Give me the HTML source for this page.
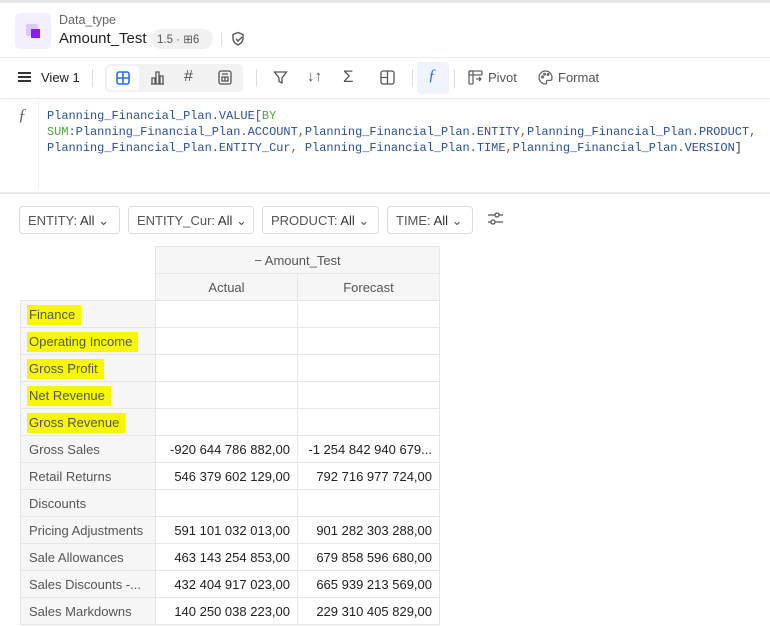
<!DOCTYPE html>
<html><head><meta charset="utf-8"><style>
*{box-sizing:border-box;margin:0;padding:0}
body{width:770px;height:626px;overflow:hidden;background:#fff;font-family:"Liberation Sans",sans-serif;color:#222;position:relative}
.a{position:absolute}
.mono{font-family:"Liberation Mono",monospace;font-size:11.95px;color:#2d4f9e;line-height:16px}
.flt{position:absolute;top:206px;height:28px;border:1px solid #dcdcdc;border-radius:4px;font-size:13px;color:#555;padding:6px 8px;white-space:nowrap}
.flt b{font-weight:normal;color:#333}
table{position:absolute;left:20px;top:246px;border-collapse:collapse;font-size:13px}
td{border:1px solid #e6e6e6;height:27px;padding:0 8px;color:#555;white-space:nowrap}
td.h{background:#f6f6f7;width:135px}
td.n{width:142px;text-align:right;color:#222;padding-right:7px}
.hl{background:#f7f700;padding:2px 6px 3px 2px;margin-left:-2px;color:#555}
</style></head><body>
<div class="a" style="left:0;top:0;width:770px;height:3px;background:#e6e6e6"></div>
<div class="a" style="left:15px;top:13px;width:36px;height:36px;background:#f4eefe;border-radius:5px"></div>
<div class="a" style="left:26px;top:24px;width:12px;height:12px;background:#ddc8fb;border-radius:2px"></div>
<div class="a" style="left:31px;top:29px;width:9px;height:9px;background:#8a1cf0"></div>
<div class="a" style="left:59px;top:13px;font-size:12.5px;color:#666">Data_type</div>
<div class="a" style="left:59px;top:30px;font-size:15px;color:#222">Amount_Test</div>
<div class="a" style="left:151px;top:29px;width:62px;height:20px;background:#f1f1f2;border-radius:10px;font-size:11.5px;color:#555;padding:3px 6px">1.5 · ⊞6</div>
<div class="a" style="left:221px;top:32px;width:1px;height:14px;background:#ddd"></div>
<svg class="a" style="left:230px;top:31px" width="16" height="16" viewBox="0 0 16 16" fill="none" stroke="#555" stroke-width="1.4"><path d="M8 1.5l5 2v4c0 3-2 5-5 6.5C5 12.5 3 10.5 3 7.5v-4z"/><path d="M6 8l2 2 4-4"/></svg>
<div class="a" style="left:0;top:57px;width:770px;height:1px;background:#ececec"></div>
<div class="a" style="left:18px;top:72px;width:13px;height:2px;background:#333;box-shadow:0 4px #333,0 8px #333"></div>
<div class="a" style="left:41px;top:70px;font-size:13px;color:#222">View 1</div>
<div class="a" style="left:92px;top:69px;width:1px;height:18px;background:#ddd"></div>
<div class="a" style="left:105px;top:64px;width:138px;height:28px;background:#f2f2f3;border-radius:5px"></div>
<div class="a" style="left:107px;top:66px;width:32px;height:24px;background:#fff;border-radius:4px"></div>
<svg class="a" style="left:116px;top:71px" width="14" height="14" fill="none" stroke="#2a6ee8" stroke-width="1.6"><rect x="1" y="1" width="12" height="12" rx="2"/><path d="M7 1v12M1 7h12"/></svg>
<svg class="a" style="left:150px;top:70px" width="15" height="15" fill="none" stroke="#555" stroke-width="1.3"><path d="M1 14h13M2 14V8h3v6M6 14V2h3v12M10 14V6h3v8"/></svg>
<div class="a" style="left:184px;top:68px;font-size:16px;color:#555">#</div>
<svg class="a" style="left:218px;top:70px" width="14" height="15" fill="none" stroke="#555" stroke-width="1.3"><rect x="1" y="1" width="12" height="13" rx="2"/><path d="M4 4h6M4 7h6v4H4z M7 7v4"/></svg>
<div class="a" style="left:256px;top:69px;width:1px;height:18px;background:#ddd"></div>
<svg class="a" style="left:273px;top:70px" width="15" height="15" fill="none" stroke="#555" stroke-width="1.3"><path d="M1.5 2h12l-4.5 6v5l-3-1.5V8z"/></svg>
<div class="a" style="left:307px;top:68px;font-size:15px;color:#555">↓↑</div>
<div class="a" style="left:343px;top:67px;font-size:17px;color:#555">Σ</div>
<svg class="a" style="left:380px;top:70px" width="15" height="15" fill="none" stroke="#555" stroke-width="1.3"><rect x="1" y="1" width="13" height="13" rx="2"/><path d="M7.5 1v13M1 7.5h6.5"/></svg>
<div class="a" style="left:412px;top:69px;width:1px;height:18px;background:#ddd"></div>
<div class="a" style="left:417px;top:62px;width:32px;height:32px;background:#eef3fd;border-radius:4px"></div>
<div class="a" style="left:428px;top:67px;font-size:16px;color:#2a6ee8;font-style:italic;font-family:'Liberation Serif',serif">ƒ</div>
<div class="a" style="left:454px;top:69px;width:1px;height:18px;background:#ddd"></div>
<svg class="a" style="left:468px;top:70px" width="15" height="15" fill="none" stroke="#666" stroke-width="1.3"><rect x="1" y="1" width="13" height="4" rx="1"/><rect x="1" y="1" width="4" height="13" rx="1"/><path d="M8 9h5M11 7l2 2-2 2"/></svg>
<div class="a" style="left:488px;top:70px;font-size:13px;color:#555">Pivot</div>
<svg class="a" style="left:538px;top:70px" width="15" height="15" fill="none" stroke="#666" stroke-width="1.3"><path d="M7.5 1a6.5 6.5 0 1 0 0 13c1 0 1.3-.8 1-1.6-.4-1 .2-2 1.3-2H12c1.2 0 2-1 2-2.5C14 3.8 11 1 7.5 1z"/><circle cx="4.5" cy="7" r=".8"/><circle cx="6.5" cy="4.2" r=".8"/><circle cx="10" cy="4.5" r=".8"/></svg>
<div class="a" style="left:558px;top:70px;font-size:13px;color:#555">Format</div>
<div class="a" style="left:0;top:98px;width:770px;height:1px;background:#ececec;box-shadow:0 1px 2px #eee"></div>
<div class="a" style="left:18px;top:105px;font-size:17px;color:#666;font-style:italic;font-family:'Liberation Serif',serif">ƒ</div>
<div class="a" style="left:38px;top:102px;width:1px;height:88px;background:#f0f0f0"></div>
<div class="a mono" style="left:47px;top:108px;white-space:pre">Planning_Financial_Plan.VALUE[<span style="color:#4fa83d">BY</span>
<span style="color:#4fa83d">SUM</span>:Planning_Financial_Plan.ACCOUNT<span style="color:#b5452f">,</span>Planning_Financial_Plan.ENTITY<span style="color:#b5452f">,</span>Planning_Financial_Plan.PRODUCT<span style="color:#b5452f">,</span>
Planning_Financial_Plan.ENTITY_Cur<span style="color:#b5452f">,</span> Planning_Financial_Plan.TIME<span style="color:#b5452f">,</span>Planning_Financial_Plan.VERSION<span style="color:#333">]</span></div>
<div class="a" style="left:0;top:192px;width:770px;height:2px;background:#e8e8e8"></div>
<div class="flt" style="left:19px;width:101px">ENTITY: <b>All</b> ⌄</div>
<div class="flt" style="left:128px;width:126px">ENTITY_Cur: <b>All</b> ⌄</div>
<div class="flt" style="left:262px;width:117px">PRODUCT: <b>All</b> ⌄</div>
<div class="flt" style="left:387px;width:86px">TIME: <b>All</b> ⌄</div>
<svg class="a" style="left:487px;top:211px" width="17" height="16" fill="none" stroke="#555" stroke-width="1.3"><path d="M1 4h15M1 11h15"/><circle cx="10" cy="4" r="2" fill="#fff"/><circle cx="6" cy="11" r="2" fill="#fff"/></svg>
<table>
<tr><td style="border:none;background:#fff" rowspan="2"></td><td colspan="2" style="background:#f6f6f7;text-align:center;height:27px">− Amount_Test</td></tr>
<tr><td style="background:#f6f6f7;text-align:center">Actual</td><td style="background:#f6f6f7;text-align:center">Forecast</td></tr>
<tr><td class="h"><span class="hl">Finance</span></td><td class="n"></td><td class="n"></td></tr>
<tr><td class="h"><span class="hl">Operating Income</span></td><td class="n"></td><td class="n"></td></tr>
<tr><td class="h"><span class="hl">Gross Profit</span></td><td class="n"></td><td class="n"></td></tr>
<tr><td class="h"><span class="hl">Net Revenue</span></td><td class="n"></td><td class="n"></td></tr>
<tr><td class="h"><span class="hl">Gross Revenue</span></td><td class="n"></td><td class="n"></td></tr>
<tr><td class="h">Gross Sales</td><td class="n">-920 644 786 882,00</td><td class="n">-1 254 842 940 679...</td></tr>
<tr><td class="h">Retail Returns</td><td class="n">546 379 602 129,00</td><td class="n">792 716 977 724,00</td></tr>
<tr><td class="h">Discounts</td><td class="n"></td><td class="n"></td></tr>
<tr><td class="h">Pricing Adjustments</td><td class="n">591 101 032 013,00</td><td class="n">901 282 303 288,00</td></tr>
<tr><td class="h">Sale Allowances</td><td class="n">463 143 254 853,00</td><td class="n">679 858 596 680,00</td></tr>
<tr><td class="h">Sales Discounts -...</td><td class="n">432 404 917 023,00</td><td class="n">665 939 213 569,00</td></tr>
<tr><td class="h">Sales Markdowns</td><td class="n">140 250 038 223,00</td><td class="n">229 310 405 829,00</td></tr>
</table>
</body></html>
